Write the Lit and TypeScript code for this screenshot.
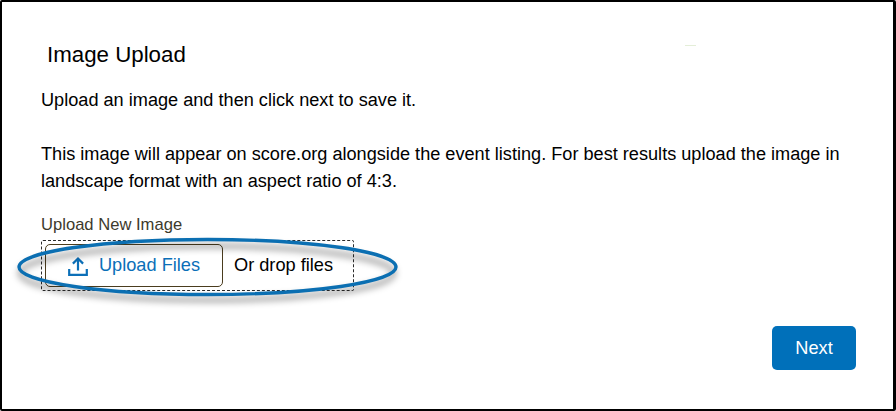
import { LitElement, html, css, svg } from "lit";
import { customElement } from "lit/decorators.js";

@customElement("app-root")
export class AppRoot extends LitElement {
  static styles = css`
    :host {
      display: block;
      width: 896px;
      height: 411px;
      font-family: "Liberation Sans", Arial, sans-serif;
      color: #000;
    }
    .frame {
      position: relative;
      box-sizing: border-box;
      width: 896px;
      height: 411px;
      border: 2px solid #000;
      border-right-width: 3px;
      border-radius: 2px;
      background: #fff;
      padding: 39px 37px 0 39px;
      display: flex;
      flex-direction: column;
      overflow: hidden;
    }
    h1 {
      margin: 0 0 0 6px;
      font-size: 22.3px;
      font-weight: 400;
      line-height: 28px;
    }
    p {
      margin: 0;
      font-size: 18.15px;
      line-height: 27px;
    }
    .intro { margin-top: 18px; }
    .info { margin-top: 27px; width: 810px; }
    .label {
      margin-top: 20px;
      font-size: 16.6px;
      line-height: 20px;
      color: #3d3a2c;
    }
    .drop {
      box-sizing: border-box;
      margin-top: 5px;
      width: 313px;
      height: 51px;
      border: 1px dashed #2b2b2b;
      border-radius: 2px;
      padding: 3px;
      display: flex;
      align-items: flex-start;
      gap: 11px;
    }
    .upload {
      box-sizing: border-box;
      width: 178px;
      height: 43px;
      border: 1px solid #4a3c1e;
      border-radius: 5px;
      background: #fff;
      color: #0b6fb8;
      font: inherit;
      font-size: 18.2px;
      display: flex;
      align-items: center;
      justify-content: center;
      gap: 11px;
      padding: 0;
    }
    .upload svg { display: block; }
    .or { font-size: 18.2px; line-height: 43px; }
    .actions {
      display: flex;
      justify-content: flex-end;
      margin-top: 35px;
    }
    .next {
      box-sizing: border-box;
      width: 84px;
      height: 44px;
      border: 0;
      border-radius: 5px;
      background: #0070ba;
      color: #fff;
      font: inherit;
      font-size: 18.2px;
    }
    .note {
      position: absolute;
      left: 0;
      top: 0;
      pointer-events: none;
    }
    .speck {
      position: absolute;
      left: 683px;
      top: 43px;
      width: 11px;
      height: 1px;
      background: #e4eed8;
    }
  `;

  render() {
    return html`<div class="frame">
      <h1>Image Upload</h1>
      <p class="intro">Upload an image and then click next to save it.</p>
      <p class="info">This image will appear on score.org alongside the event listing. For best results upload the image in landscape format with an aspect ratio of 4:3.</p>
      <div class="label">Upload New Image</div>
      <div class="drop">
        <button class="upload">
          <svg width="20" height="20" viewBox="0 0 20 20" fill="none" stroke="#0b6fb8" stroke-width="2.2">
            <path d="M10 14.5V2.5M4.9 7.6 10 2.5l5.1 5.1"></path>
            <path d="M1.2 13v5.8h17.6V13"></path>
          </svg>
          <span>Upload Files</span>
        </button>
        <span class="or">Or drop files</span>
      </div>
      <div class="actions"><button class="next">Next</button></div>
      <div class="speck"></div>
      <svg class="note" width="896" height="411" viewBox="0 0 896 411">
        <defs>
          <filter id="sh" x="-10%" y="-40%" width="120%" height="200%">
            <feGaussianBlur stdDeviation="3.5"></feGaussianBlur>
          </filter>
        </defs>
        ${svg`<ellipse cx="205" cy="271" rx="187" ry="27" fill="none" stroke="#000" stroke-opacity="0.5" stroke-width="3.5" filter="url(#sh)"></ellipse>
        <ellipse cx="205.5" cy="265" rx="188.5" ry="27.5" fill="none" stroke="#0b6fb2" stroke-width="3.4"></ellipse>`}
      </svg>
    </div>`;
  }
}
